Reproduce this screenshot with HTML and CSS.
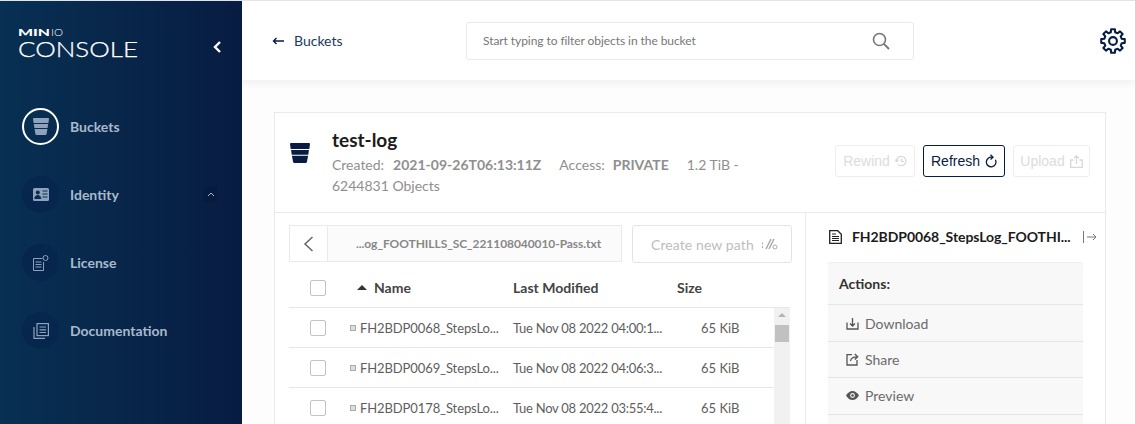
FILE: index.html
```html
<!DOCTYPE html>
<html lang="en">

<head>
    <meta charset="UTF-8">
    <title>MinIO Console</title>
    <link rel="stylesheet" href="styles.css">
</head>

<body>
    <div class="app">
        <aside class="sidebar">
            <div class="brand">
                <svg class="logo" width="122" height="38" viewBox="0 0 122 38">
                    <text class="logo-min" x="0" y="9" textLength="32" lengthAdjust="spacingAndGlyphs">MIN</text>
                    <text class="logo-io" x="33" y="9" textLength="12" lengthAdjust="spacingAndGlyphs">IO</text>
                    <text class="logo-name" x="0" y="30" textLength="120" lengthAdjust="spacingAndGlyphs">CONSOLE</text>
                </svg>
                <svg class="collapse" width="10" height="14" viewBox="0 0 10 14"><path d="M8 2 3 7l5 5" fill="none" stroke="#fff" stroke-width="2.4"/></svg>
            </div>
            <nav class="nav">
                <div class="nav-item">
                    <span class="nav-icon selected">
                        <svg width="16" height="17" viewBox="0 0 20 20" preserveAspectRatio="none"><path d="M1 0h18a1 1 0 0 1 1 1l-.7 5H.7L0 1a1 1 0 0 1 1-1zM1.050 7h17.900l-.72 4.800H1.770zM1.920 12.800h16.160L17 18.500a1.500 1.500 0 0 1-1.500 1.500h-11A1.500 1.500 0 0 1 3 18.500z" fill="#8ea3bb"/></svg>
                    </span>
                    <span class="nav-label">Buckets</span>
                </div>
                <div class="nav-item">
                    <span class="nav-icon">
                        <svg width="16" height="13" viewBox="0 0 16 13"><rect width="16" height="13" rx="1.500" fill="#8ea3bb"/><circle cx="4.800" cy="4.500" r="2" fill="#0a2c52"/><path d="M1.800 10.500c0-4 6-4 6 0zM9.500 3h5M9.500 6h5M9.500 9h5" fill="#0a2c52" stroke="#0a2c52"/></svg>
                    </span>
                    <span class="nav-label">Identity</span>
                    <span class="nav-toggle">
                        <svg width="8" height="5" viewBox="0 0 8 5"><path d="M1 4l3-3 3 3" fill="none" stroke="#a9b9cc" stroke-width="1"/></svg>
                    </span>
                </div>
                <div class="nav-item">
                    <span class="nav-icon">
                        <svg width="17" height="16" viewBox="0 0 17 16"><g fill="none" stroke="#8ea3bb"><path d="M10.500 3.500H1.500v12h10V7"/><circle cx="13.500" cy="3" r="2.500"/><path d="M3.500 7h6M3.500 9.500h6M3.500 12h6"/></g></svg>
                    </span>
                    <span class="nav-label">License</span>
                </div>
                <div class="nav-item">
                    <span class="nav-icon">
                        <svg width="16" height="16" viewBox="0 0 16 16"><g fill="none" stroke="#8ea3bb" stroke-width="1.200"><rect x="4" y=".6" width="11.400" height="12"/><path d="M6.500 4h6.500M6.500 6.800h6.500M6.500 9.500h6.500M1 4v11.400h11"/></g></svg>
                    </span>
                    <span class="nav-label">Documentation</span>
                </div>
            </nav>
        </aside>

        <main class="main">
            <header class="topbar">
                <div class="back">
                    <svg width="12" height="8" viewBox="0 0 12 8"><path d="M12 4H2M4.500 1 1.500 4l3 3" fill="none" stroke="#081c42" stroke-width="1.400"/></svg>
                    <span>Buckets</span>
                </div>
                <div class="search">
                    <span>Start typing to filter objects in the bucket</span>
                    <svg width="18" height="18" viewBox="0 0 18 18"><circle cx="7.500" cy="7.500" r="6" fill="none" stroke="#777" stroke-width="1.600"/><path d="M12 12l5 5" stroke="#777" stroke-width="1.800"/></svg>
                </div>
                <svg class="gear" width="26" height="26" viewBox="0 0 24 24" fill="none" stroke="#081c42" stroke-width="1.900" stroke-linejoin="round"><polygon points="10,3.950 10.280,1.130 13.720,1.130 14,3.950 16.280,4.890 18.470,3.100 20.900,5.530 19.110,7.720 20.050,10 22.870,10.280 22.870,13.720 20.050,14 19.110,16.280 20.900,18.470 18.470,20.900 16.280,19.110 14,20.050 13.720,22.870 10.280,22.870 10,20.050 7.720,19.110 5.530,20.900 3.100,18.470 4.890,16.280 3.950,14 1.130,13.720 1.130,10.280 3.950,10 4.890,7.720 3.100,5.530 5.530,3.100 7.720,4.890"/><circle cx="12" cy="12" r="3.600"/></svg>
            </header>

            <section class="card">
                <div class="bucket-head">
                    <svg class="bucket-icon" width="20" height="20" viewBox="0 0 20 20"><path d="M1 0h18a1 1 0 0 1 1 1l-.7 5H.7L0 1a1 1 0 0 1 1-1zM1.050 7h17.900l-.72 4.800H1.770zM1.920 12.800h16.160L17 18.500a1.500 1.500 0 0 1-1.500 1.500h-11A1.500 1.500 0 0 1 3 18.500z" fill="#081c42"/></svg>
                    <div class="bucket-info">
                        <h1>test-log</h1>
                        <div class="bucket-meta">
                            <span>Created:</span><b class="created">2021-09-26T06:13:11Z</b><span class="access">Access:</span><b class="private">PRIVATE</b><span class="size">1.2 TiB -</span><br>
                            <span>6244831 Objects</span>
                        </div>
                    </div>
                    <div class="bucket-actions">
                        <button class="btn rewind">Rewind
                            <svg width="12" height="12" viewBox="0 0 12 12" fill="none" stroke="#d8d8d8" stroke-width="1.200"><path d="M1.500 6a4.700 4.700 0 1 1 1.400 3.400M0 4.500 1.500 6.500 3.500 4.800M6.500 3.500V6.500H9"/></svg>
                        </button>
                        <button class="btn active">Refresh
                            <svg width="12" height="14" viewBox="0 0 12 14" fill="none" stroke="#081c42" stroke-width="1.300"><path d="M7 3.300A4.800 4.800 0 1 0 10.400 5.800"/><path d="M5.500 .8 8 3.200 5.500 5.400"/></svg>
                        </button>
                        <button class="btn upload">Upload
                            <svg width="13" height="13" viewBox="0 0 13 13" fill="none" stroke="#d8d8d8" stroke-width="1.300"><path d="M3.500 5H.7v7.300h11.600V5H9.500M6.500 9V1M4 3.300 6.500 .9 9 3.300"/></svg>
                        </button>
                    </div>
                </div>

                <div class="browser">
                    <div class="objects">
                        <div class="path-row">
                            <div class="breadcrumb">
                                <span class="crumb-back">
                                    <svg width="11" height="16" viewBox="0 0 11 16"><path d="M9.500 1 2 8l7.500 7" fill="none" stroke="#666" stroke-width="1.500"/></svg>
                                </span>
                                <span class="crumb-text">...og_FOOTHILLS_SC_221108040010-Pass.txt</span>
                            </div>
                            <div class="new-path">
                                <span>Create new path</span>
                                <svg width="17" height="12" viewBox="0 0 17 12" fill="none" stroke="#aaa"><path d="M1 5.500h1M1 9h1" stroke-width="2"/><path d="M5 11 10 1M8 11 13 1" stroke-width="1.500"/><circle cx="14" cy="9" r="2"/></svg>
                            </div>
                        </div>

                        <div class="table-head">
                            <span class="check"></span>
                            <span class="col-name"><i class="sort"></i>Name</span>
                            <span class="col-date">Last Modified</span>
                            <span class="col-size">Size</span>
                        </div>

                        <div class="table-body">
                            <div class="rows">
                                <div class="row">
                                    <span class="check"></span>
                                    <span class="col-name"><i class="file"></i>FH2BDP0068_StepsLo...</span>
                                    <span class="col-date">Tue Nov 08 2022 04:00:1...</span>
                                    <span class="col-size">65 KiB</span>
                                </div>
                                <div class="row">
                                    <span class="check"></span>
                                    <span class="col-name"><i class="file"></i>FH2BDP0069_StepsLo...</span>
                                    <span class="col-date">Tue Nov 08 2022 04:06:3...</span>
                                    <span class="col-size">65 KiB</span>
                                </div>
                                <div class="row">
                                    <span class="check"></span>
                                    <span class="col-name"><i class="file"></i>FH2BDP0178_StepsLo...</span>
                                    <span class="col-date">Tue Nov 08 2022 03:55:4...</span>
                                    <span class="col-size">65 KiB</span>
                                </div>
                            </div>
                            <div class="scrollbar">
                                <i class="scroll-up"></i>
                                <i class="scroll-thumb"></i>
                            </div>
                        </div>
                    </div>

                    <div class="details">
                        <div class="details-title">
                            <svg width="13" height="14" viewBox="0 0 13 14"><path d="M.7.7h8l3.600 3.600v9H.7z" fill="none" stroke="#222" stroke-width="1.300"/><path d="M3 4h4M3 6.500h7M3 8.500h7M3 10.500h7" stroke="#222"/></svg>
                            <span class="details-name">FH2BDP0068_StepsLog_FOOTHI...</span>
                            <svg width="14" height="12" viewBox="0 0 14 12" fill="none" stroke="#777"><path d="M.5 0v12M4 6h9M10 3l3 3-3 3"/></svg>
                        </div>
                        <div class="actions">
                            <div class="actions-head">Actions:</div>
                            <div class="action">
                                <svg width="13" height="13" viewBox="0 0 13 13" fill="none" stroke="#555" stroke-width="1.300"><path d="M1 5.500v6.500h11V5.500M6.500 1v8M4 6.500l2.500 2.500L9 6.500"/></svg>
                                <span>Download</span>
                            </div>
                            <div class="action">
                                <svg width="13" height="13" viewBox="0 0 13 13" fill="none" stroke="#555" stroke-width="1.300"><path d="M6 1.700H1V12h10V7"/><path d="M4.500 8c.5-3 3-4.200 6-4.200M8.800 1l2.900 2.800-2.900 2.700"/></svg>
                                <span>Share</span>
                            </div>
                            <div class="action">
                                <svg width="13" height="9" viewBox="0 0 13 9"><path d="M0 4.500C2 1.500 4 0 6.500 0S11 1.500 13 4.500C11 7.500 9 9 6.500 9S2 7.500 0 4.500z" fill="#555"/><circle cx="6.500" cy="4.500" r="2.400" fill="#f8f8f8"/><circle cx="6.500" cy="4.500" r="1.300" fill="#555"/></svg>
                                <span>Preview</span>
                            </div>
                            <div class="action"></div>
                        </div>
                    </div>
                </div>
            </section>
        </main>
    </div>
</body>

</html>
```

FILE: styles.css
```css
* {
    margin: 0;
    padding: 0;
    box-sizing: border-box;
}

html,
body {
    height: 424px;
    overflow: hidden;
}

body {
    font-family: Lato, "Open Sans", sans-serif;
    font-size: 14px;
    color: #393939;
    background-color: #fff;
}

i {
    display: block;
}

.app {
    display: flex;
    height: 424px;
    overflow: hidden;
    border-top: 1px solid #e3e3e3;
}

/* sidebar */
.sidebar {
    width: 242px;
    flex-shrink: 0;
    background: linear-gradient(90deg, #073052 0%, #081c42 100%);
}

.brand {
    display: flex;
    justify-content: space-between;
    align-items: flex-start;
    height: 78px;
    padding: 26px 20px 0 18px;
}

.logo {
    display: block;
    fill: #fff;
    font-family: Lato, sans-serif;
}

.logo-min {
    font-size: 10px;
    font-weight: 900;
}

.logo-io {
    font-size: 10px;
    font-weight: 300;
}

.logo-name {
    font-size: 21px;
    font-weight: 300;
    stroke: #fff;
    stroke-width: .25px;
}

.collapse {
    margin-top: 13px;
}

.nav {
    display: flex;
    flex-direction: column;
    gap: 31px;
    padding: 29px 0 0 22px;
}

.nav-item {
    display: flex;
    align-items: center;
    height: 37px;
}

.nav-icon {
    display: flex;
    justify-content: center;
    align-items: center;
    width: 37px;
    height: 37px;
    margin-right: 11px;
    border-radius: 50%;
    background-color: #06264e;
}

.nav-icon.selected {
    border: 2px solid #fff;
    background-color: transparent;
}

.nav-label {
    font-size: 14px;
    font-weight: 700;
    color: #a9b9cc;
}

.nav-toggle {
    display: flex;
    justify-content: center;
    align-items: center;
    width: 15px;
    height: 15px;
    margin-left: auto;
    margin-right: 24px;
    background-color: #071a3f;
}

/* main */
.main {
    flex: 1;
    min-width: 0;
    overflow: hidden;
    background-color: #fdfdfe;
}

.topbar {
    display: flex;
    align-items: center;
    height: 79px;
    background-color: #fff;
    box-shadow: 0 3px 8px rgba(0, 0, 0, .06);
    padding: 0 9px 0 30px;
}

.back {
    display: flex;
    align-items: center;
    gap: 10px;
    width: 194px;
    font-size: 14px;
    color: #1c3a5e;
}

.search {
    display: flex;
    justify-content: space-between;
    align-items: center;
    width: 448px;
    height: 38px;
    padding: 0 23px 0 16px;
    border: 1px solid #eaeaea;
    border-radius: 3px;
    font-size: 12px;
    letter-spacing: -.07px;
    color: #777;
}

.gear {
    margin-left: auto;
}

.card {
    margin: 32px 29px 0 32px;
    background-color: #fff;
    border: 1px solid #eaeaea;
}

.bucket-head {
    display: flex;
    height: 100px;
    padding: 15px 15px 0 15px;
    border-bottom: 1px solid #eaeaea;
}

.bucket-icon {
    margin-top: 15px;
    margin-right: 22px;
}

.bucket-info {
    width: 440px;
}

.bucket-info h1 {
    margin-bottom: 3px;
    font-size: 19px;
    line-height: 23px;
    font-weight: 700;
    color: #1b1b1b;
}

.bucket-meta {
    font-size: 14px;
    line-height: 21px;
    color: #8f8f8f;
}

.created {
    margin: 0 18px 0 9px;
}

.private {
    margin-left: 8px;
}

.size {
    margin-left: 18px;
}

.bucket-actions {
    display: flex;
    gap: 8px;
    margin-left: auto;
    margin-top: 17px;
}

.btn {
    display: flex;
    justify-content: center;
    align-items: center;
    gap: 5px;
    height: 32px;
    border: 1px solid #eee;
    border-radius: 3px;
    background-color: #fff;
    font-family: "Liberation Sans", sans-serif;
    font-size: 14px;
    color: #dcdcdc;
}

.rewind {
    width: 80px;
}

.upload {
    width: 77px;
}

.btn.active {
    width: 82px;
    border-color: #081c42;
    color: #081c42;
}

.browser {
    display: flex;
}

.objects {
    width: 531px;
    flex-shrink: 0;
    padding: 12px 13px 0 14px;
    border-right: 1px solid #eaeaea;
}

.path-row {
    display: flex;
    gap: 10px;
}

.breadcrumb {
    display: flex;
    width: 333px;
    height: 37px;
    border: 1px solid #eaeaea;
    background-color: #fbfbfb;
}

.crumb-back {
    display: flex;
    justify-content: center;
    align-items: center;
    width: 38px;
    background-color: #fff;
    border-right: 1px solid #eaeaea;
}

.crumb-text {
    flex: 1;
    font-size: 12px;
    font-weight: 700;
    line-height: 35px;
    letter-spacing: -.07px;
    color: #888;
    padding-left: 28px;
}

.new-path {
    display: flex;
    justify-content: space-between;
    align-items: center;
    width: 160px;
    height: 38px;
    padding: 0 13px 0 18px;
    border: 1px solid #e4e4e4;
    border-radius: 3px;
    letter-spacing: .1px;
    color: #bdbdbd;
}

.table-head,
.row {
    display: grid;
    align-items: center;
}

.table-head {
    grid-template-columns: 16px 187px 164px 60px;
    width: 501px;
    height: 45px;
    padding-left: 21px;
    padding-top: 5px;
    border-bottom: 1px solid #e6e6e6;
    font-weight: 700;
    color: #444;
}

.check {
    display: block;
    width: 16px;
    height: 16px;
    border: 1px solid #c4c4c4;
    border-radius: 2px;
    background-color: #fff;
}

.table-head .col-name {
    display: flex;
    align-items: center;
    padding-left: 31px;
}

.sort {
    width: 0;
    height: 0;
    margin-right: 7px;
    border-left: 5px solid transparent;
    border-right: 5px solid transparent;
    border-bottom: 5px solid #333;
}

.table-body {
    display: flex;
    width: 501px;
    height: 160px;
}

.rows {
    flex: 1;
}

.row {
    grid-template-columns: 16px 187px 188px 60px;
    height: 40px;
    padding-left: 21px;
    border-bottom: 1px solid #e6e6e6;
    font-size: 13px;
    color: #5e5e5e;
    white-space: nowrap;
}

.row .col-name {
    display: flex;
    align-items: center;
    gap: 4px;
    padding-left: 24px;
    letter-spacing: -.1px;
}

.row .col-date {
    letter-spacing: -.26px;
}

.file {
    width: 6px;
    height: 6px;
    flex-shrink: 0;
    border: 1px solid #aaa;
    background-color: #ddd;
}

.scrollbar {
    width: 16px;
    background-color: #f1f1f1;
}

.scroll-up {
    width: 0;
    height: 0;
    margin: 5px auto 0;
    border-left: 4px solid transparent;
    border-right: 4px solid transparent;
    border-bottom: 4px solid #b5b5b5;
}

.scroll-thumb {
    height: 17px;
    margin: 8px 1px 0;
    background-color: #c1c1c1;
}

.details {
    flex: 1;
    padding: 0 8px 0 22px;
}

.details-title {
    display: flex;
    align-items: center;
    height: 47px;
    margin-bottom: 2px;
    padding-left: 1px;
}

.details-name {
    flex: 1;
    margin-left: 10px;
    font-weight: 700;
    font-size: 14px;
    letter-spacing: -.07px;
    color: #1b1b1b;
    white-space: nowrap;
}

.actions {
    width: 255px;
    background-color: #f8f8f8;
    border-radius: 3px 3px 0 0;
    box-shadow: inset 0 1px 0 #eee;
}

.actions-head {
    height: 43px;
    line-height: 43px;
    padding-left: 11px;
    font-weight: 700;
    color: #333;
    border-bottom: 1px solid #e5e5e5;
}

.action {
    display: flex;
    align-items: center;
    gap: 6px;
    height: 36.500px;
    padding-left: 18px;
    border-bottom: 1px solid #e5e5e5;
    color: #6b6b6b;
}

.actions-head + .action {
    padding-top: 2px;
}
```
